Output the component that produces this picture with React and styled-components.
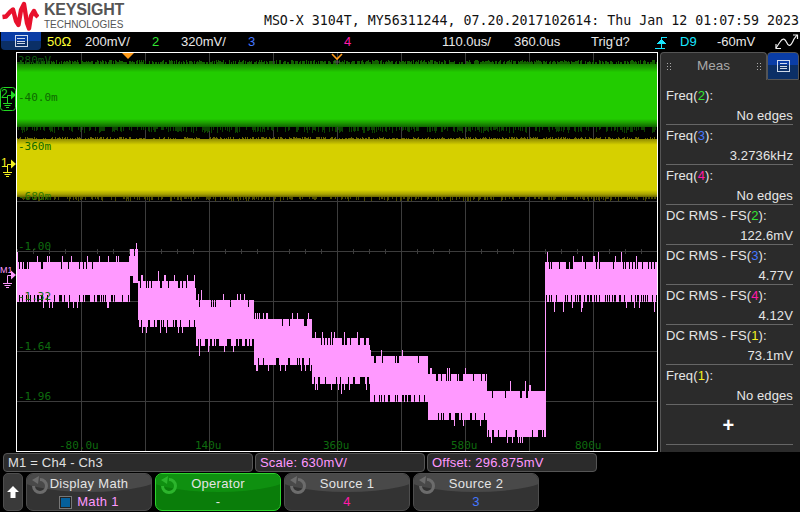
import styled, { createGlobalStyle } from 'styled-components';

const PINK = '#ff99ff';

const GlobalStyle = createGlobalStyle`
  html, body {
    margin: 0;
    background: #000;
  }
`;

const Screen = styled.div`
  width: 800px;
  height: 512px;
  background: #000;
  display: flex;
  flex-direction: column;
  overflow: hidden;
  font-family: "Liberation Sans", Arial, sans-serif;
  font-size: 13px;
  color: #e6e6e6;
`;

/* header */
const Header = styled.div`
  height: 32px;
  background: #fff;
  display: flex;
  align-items: flex-start;
  justify-content: space-between;
`;

const Brand = styled.div`
  display: flex;
  gap: 5px;
  padding: 1px 0 0 1px;
`;

const BrandText = styled.div`
  color: #555;
  display: flex;
  flex-direction: column;
  padding-top: 1px;
`;

const BrandName = styled.span`
  font-size: 16px;
  font-weight: 700;
  line-height: 16px;
  letter-spacing: -0.2px;
`;

const BrandSub = styled.span`
  font-size: 10px;
  line-height: 11px;
  margin-top: 1px;
`;

const Title = styled.div`
  font-family: "DejaVu Sans Mono", monospace;
  font-size: 13.28px;
  line-height: 16px;
  padding: 13px 1px 0 0;
  color: #111;
  white-space: pre;
`;

/* status bar */
const StatusBar = styled.div`
  height: 20px;
  display: flex;
  align-items: center;
`;

const MenuButton = styled.div`
  width: 40px;
  height: 18px;
  margin: 0 6px 2px 1px;
  border-radius: 0 0 4px 4px;
  background: linear-gradient(#0a3da6 0 50%, #0b2f66 50% 100%);
  display: flex;
  align-items: center;
  justify-content: center;
`;

const StatusCell = styled.div`
  width: ${p => p.$w}px;
  color: ${p => p.$color || '#e8e8e8'};
  font-size: 13px;
  line-height: 20px;
  white-space: nowrap;
  display: flex;
  align-items: center;
`;

/* scope area */
const Middle = styled.div`
  height: 400px;
  display: flex;
`;

const Gutter = styled.div`
  width: 16px;
  position: relative;
`;

const Marker = styled.div`
  position: absolute;
  left: 0;
  top: ${p => p.$top}px;
  color: ${p => p.$color};
  z-index: 2;
  line-height: 0;
`;

const Scope = styled.div`
  width: 642px;
  height: 400px;
  box-sizing: border-box;
  border: 1px solid #fff;
  line-height: 0;
`;

/* measurements */
const Side = styled.div`
  width: 140px;
  margin-left: 2px;
  display: flex;
  flex-direction: column;
`;

const TabRow = styled.div`
  height: 28px;
  display: flex;
`;

const MeasTab = styled.div`
  flex: 1;
  box-sizing: border-box;
  background: #2b2b2b;
  border: 1px solid #555;
  border-bottom: none;
  border-radius: 4px 4px 0 0;
  display: flex;
  align-items: center;
  justify-content: space-between;
  padding: 0 5px 2px;
  color: #a8a8a8;
  font-size: 13.5px;
`;

const Grip = styled.span`
  width: 5px;
  height: 8px;
  background-image: radial-gradient(#aaa 0.8px, transparent 1px);
  background-size: 3px 3px;
`;

const BlueTab = styled.div`
  width: 32px;
  margin-right: 1px;
  box-sizing: border-box;
  border: 1px solid #555;
  border-radius: 4px 4px 0 0;
  background: linear-gradient(#0a3da6 0 45%, #0b2f66 45% 100%);
  display: flex;
  align-items: center;
  justify-content: center;
`;

const MeasList = styled.div`
  flex: 1;
  box-sizing: border-box;
  background: #2b2b2b;
  border-left: 1px solid #555;
  padding: 5px 7px 0 5px;
`;

const MeasRow = styled.div`
  height: 40px;
  box-sizing: border-box;
  border-bottom: 1px solid #666;
  display: flex;
  flex-direction: column;
  justify-content: space-between;
  padding: 3px 0 0;
  line-height: 16px;
  letter-spacing: 0.12px;
`;

const MeasValue = styled.span`
  align-self: flex-end;
`;

const Chan = styled.span`
  color: ${p => p.$color};
`;

const AddRow = styled(MeasRow)`
  align-items: center;
  justify-content: center;
  padding: 0 2px 0 0;
  color: #fff;
  font-size: 20px;
  font-weight: 700;
`;

/* bottom */
const InfoRow = styled.div`
  height: 19px;
  margin-top: 1px;
  padding-left: 3px;
  display: flex;
  gap: 2px;
`;

const InfoBox = styled.div`
  width: ${p => p.$w}px;
  box-sizing: border-box;
  background: #2b2b2b;
  border: 1px solid #555;
  border-radius: 4px;
  padding-left: 4px;
  line-height: 17px;
  color: ${p => p.$color || '#e0e0e0'};
  letter-spacing: 0.2px;
`;

const KeyRow = styled.div`
  height: 38px;
  margin-top: 1px;
  padding-left: 3px;
  display: flex;
  gap: 3px;
`;

const ArrowKey = styled.div`
  width: 20px;
  box-sizing: border-box;
  border: 1px solid #4e4e4e;
  border-radius: 5px;
  background: #3a3a3a;
  display: flex;
  align-items: center;
  justify-content: center;
`;

const SoftKey = styled.div`
  width: ${p => p.$w || 126}px;
  box-sizing: border-box;
  position: relative;
  overflow: hidden;
  border: 1px solid ${p => (p.$active ? '#2ed42e' : '#4e4e4e')};
  border-radius: 7px;
  background: ${p => (p.$active ? '#0a7d0a' : '#333')};
  display: flex;
  flex-direction: column;
  align-items: center;
  color: #e4e4e4;
  line-height: 16px;
  letter-spacing: 0.3px;

  &::before {
    content: '';
    position: absolute;
    left: -10%;
    width: 120%;
    top: -16px;
    height: 34px;
    border-radius: 50%;
    background: ${p => (p.$active ? '#0f9010' : '#494949')};
  }
`;

const KeyIcon = styled.span`
  position: absolute;
  left: 3px;
  top: 2px;
  line-height: 0;
  color: ${p => (p.$active ? '#2cb52c' : '#6c6c6c')};
`;

const KeyLabel = styled.span`
  position: relative;
  margin-top: 2px;
`;

const KeyValue = styled.span`
  position: relative;
  margin-top: 2px;
  color: ${p => p.$color || '#e4e4e4'};
  display: flex;
  align-items: center;
  gap: 5px;
`;

const Check = styled.span`
  width: 13px;
  height: 13px;
  box-sizing: border-box;
  border: 1px solid #777;
  background: #05609c;
  box-shadow: inset 0 0 0 1px #222;
`;

// seeded so that the trace noise is the same on every load
let seed = 73;
const rnd = () => {
  seed = (seed * 16807) % 2147483647;
  return seed / 2147483647;
};

const SEGMENTS = [
  { x0: 17, x1: 130, t: 262, h: 40 },
  { x0: 130, x1: 138, t: 249, h: 34 },
  { x0: 138, x1: 196, t: 281, h: 46 },
  { x0: 196, x1: 254, t: 300, h: 46 },
  { x0: 254, x1: 312, t: 319, h: 46 },
  { x0: 312, x1: 370, t: 338, h: 46 },
  { x0: 370, x1: 428, t: 356, h: 46 },
  { x0: 428, x1: 487, t: 374, h: 46 },
  { x0: 487, x1: 546, t: 391, h: 46 },
  { x0: 546, x1: 657, t: 262, h: 40 },
];

const tracePath = () => {
  let d = 'M545.5 262V430';
  SEGMENTS.forEach(({ x0, x1, t, h }) => {
    for (let x = x0; x < x1; x++) {
      let top = t + 7;
      let bottom = t + h - 7;
      const a = rnd();
      const b = rnd();
      if (a < 0.85) top = t;
      if (a < 0.08) top = t - 6;
      if (a < 0.012) top = t - 10;
      if (b < 0.72) bottom = t + h;
      if (b < 0.07) bottom = t + h + 6;
      if (b < 0.012) bottom = t + h + 10;
      d += `M${x + 0.5} ${top}V${bottom}`;
    }
  });
  return d;
};

const fringePath = (y0, y1, chance) => {
  let d = '';
  for (let x = 17; x < 657; x++) {
    if (rnd() < chance) d += `M${x + 0.5} ${y0}V${y0 + (y1 - y0) * (0.4 + rnd() * 0.6)}`;
  }
  return d;
};

const TRACE = tracePath();
const GREEN_TOP = fringePath(64, 60, 0.7);
const GREEN_BOTTOM = fringePath(127, 133, 0.45);
const YELLOW_TOP = fringePath(139, 137, 0.5);
const YELLOW_BOTTOM = fringePath(197, 201, 0.35);

const V_LINES = [81, 145, 209, 273, 337, 401, 465, 529, 593];
const H_LINES = [101, 151, 201, 251, 301, 351, 401];
const H_TICKS = Array.from({ length: 40 }, (_, i) => 17 + i * 16);

const Y_LABELS = [
  ['280mV', 64, '#0d5a0d'],
  ['-40.0m', 101, '#0e6a00'],
  ['-360m', 150, '#0f6a00'],
  ['-680m', 200, '#2f7a00'],
  ['-1.00', 250, '#0e6a0e'],
  ['-1.32', 300, '#0e6a0e'],
  ['-1.64', 350, '#0e6a0e'],
  ['-1.96', 400, '#0e6a0e'],
];
const X_LABELS = [
  ['-80.0u', 59],
  ['140u', 195],
  ['360u', 323],
  ['580u', 451],
  ['800u', 575],
];

const Traces = () => (
  <svg width="640" height="398" viewBox="17 53 640 398">
    <defs>
      <linearGradient id="greenBand" x1="0" y1="0" x2="0" y2="1">
        <stop offset="0" stopColor="#178000" />
        <stop offset="0.06" stopColor="#1da000" />
        <stop offset="0.13" stopColor="#22cc00" />
        <stop offset="0.87" stopColor="#22cc00" />
        <stop offset="0.93" stopColor="#1da000" />
        <stop offset="1" stopColor="#0f6400" />
      </linearGradient>
      <linearGradient id="yellowBand" x1="0" y1="0" x2="0" y2="1">
        <stop offset="0" stopColor="#8f8b00" />
        <stop offset="0.1" stopColor="#d6d000" />
        <stop offset="0.88" stopColor="#d6d000" />
        <stop offset="0.95" stopColor="#a8a300" />
        <stop offset="1" stopColor="#6a6600" />
      </linearGradient>
    </defs>

    <g stroke="#3c3c3c" shapeRendering="crispEdges">
      {V_LINES.map(x => <line key={x} x1={x + 0.5} x2={x + 0.5} y1="53" y2="451" />)}
      {H_LINES.map(y => <line key={y} x1="17" x2="657" y1={y + 0.5} y2={y + 0.5} />)}
      {H_TICKS.map(x => <line key={x} x1={x + 0.5} x2={x + 0.5} y1="249" y2="254" />)}
    </g>

    <path d={GREEN_TOP} stroke="#135f00" shapeRendering="crispEdges" />
    <path d={GREEN_BOTTOM} stroke="#0c4400" shapeRendering="crispEdges" />
    <rect x="17" y="64" width="640" height="63" fill="url(#greenBand)" />
    <path d={YELLOW_TOP} stroke="#6a6600" shapeRendering="crispEdges" />
    <path d={YELLOW_BOTTOM} stroke="#4c4a00" shapeRendering="crispEdges" />
    <rect x="17" y="139" width="640" height="58" fill="url(#yellowBand)" />

    <path d={TRACE} stroke={PINK} shapeRendering="crispEdges" />

    <polygon points="122,53 134,53 128,59" fill="#ff9a1a" />
    <path d="M332 54L337 59L342 54" stroke="#ff9a1a" strokeWidth="1.6" fill="none" />
    <path d="M337 60V65M334 62H340" stroke="#555" />

    <g fontFamily="'DejaVu Sans Mono', monospace" fontSize="11">
      {Y_LABELS.map(([label, y, color]) => (
        <text key={label} x="18" y={y} fill={color}>{label}</text>
      ))}
      {X_LABELS.map(([label, x]) => (
        <text key={label} x={x} y="449" fill="#0e6a0e">{label}</text>
      ))}
    </g>
  </svg>
);

const GroundGlyph = ({ label, boxed }) => (
  <svg width="18" height="28" viewBox="0 0 18 28" fill="none" stroke="currentColor">
    {boxed && <rect x="0.5" y="2.5" width="15" height="23" rx="3" />}
    <text x="1" y="13" fontSize="12" fontFamily="'Liberation Sans', sans-serif" fill="currentColor" stroke="none">{label}</text>
    <path d="M7.5 18V10.5H11M3 18.5H12M4.5 20.5H10.5M6 22.5H9" />
    <polygon points="11,5.5 16,10 11,14.5" fill="currentColor" stroke="none" />
  </svg>
);

const MathGlyph = () => (
  <svg width="18" height="26" viewBox="0 0 18 26" fill="none" stroke="currentColor">
    <text x="0" y="8" fontSize="9" fontFamily="'Liberation Sans', sans-serif" fill="currentColor" stroke="none">M1</text>
    <path d="M7.5 18V10.5H11M3 18.5H12M4.5 20.5H10.5M6 22.5H9" />
    <polygon points="11,5.5 16,10 11,14.5" fill="currentColor" stroke="none" />
  </svg>
);

const MenuIcon = ({ tall }) => (
  <svg width={tall ? 13 : 14} height={tall ? 14 : 12} viewBox="0 0 14 13" fill="none" stroke="#dfe6f2" shapeRendering="crispEdges">
    <rect x="0.5" y="0.5" width="13" height="12" />
    <path d="M3 3.5H11M3 6.5H11M3 9.5H11" />
  </svg>
);

const Logo = () => (
  <svg width="38" height="31" viewBox="0 0 38 31" fill="none">
    <path
      d="M1.5 16L5 15.5L9 11L12 8.5L15 20L17.5 24L20 9L23 3L26 22L28 27.5L30 15L33 10L35 14L37 16"
      stroke="#e8112d"
      strokeWidth="4.4"
      strokeLinejoin="round"
    />
  </svg>
);

const RotateIcon = () => (
  <svg width="20" height="18" viewBox="0 0 20 18" fill="none">
    <path d="M10 3.5A6.5 6.5 0 1 1 3.5 10" stroke="currentColor" strokeWidth="3" />
    <polygon points="2,4 9,0 8,8" fill="currentColor" />
  </svg>
);

const TrigIcon = () => (
  <svg width="14" height="16" viewBox="0 0 14 16" fill="none" stroke="#19e6ff" strokeWidth="1.3" shapeRendering="crispEdges">
    <path d="M0 14.5H10M6.5 14V3.5H12" />
    <polygon points="2,10 11,10 6.5,5" fill="#19e6ff" stroke="none" />
  </svg>
);

const WaveIcon = () => (
  <svg width="24" height="18" viewBox="0 0 24 18" fill="none" stroke="#f0f0f0" strokeWidth="1.2">
    <path d="M1 15L5 9C8 4 10 6 12 10C14 14 16 13 19 6L22 2" />
    <path d="M18 2H22.5V6M1 11V15.5H6" />
  </svg>
);

const UpArrow = () => (
  <svg width="12" height="12" viewBox="0 0 12 12">
    <polygon points="6,0 12,6 8.5,6 8.5,12 3.5,12 3.5,6 0,6" fill="#fff" />
  </svg>
);

const MEAS = [
  { name: 'Freq', ch: '2', color: '#33e633', value: 'No edges' },
  { name: 'Freq', ch: '3', color: '#4477ff', value: '3.2736kHz' },
  { name: 'Freq', ch: '4', color: '#ff1aa8', value: 'No edges' },
  { name: 'DC RMS - FS', ch: '2', color: '#33e633', value: '122.6mV' },
  { name: 'DC RMS - FS', ch: '3', color: '#4477ff', value: '4.77V' },
  { name: 'DC RMS - FS', ch: '4', color: '#ff1aa8', value: '4.12V' },
  { name: 'DC RMS - FS', ch: '1', color: '#f4f020', value: '73.1mV' },
  { name: 'Freq', ch: '1', color: '#f4f020', value: 'No edges' },
];

const App = () => (
  <Screen>
    <GlobalStyle />
    <Header>
      <Brand>
        <Logo />
        <BrandText>
          <BrandName>KEYSIGHT</BrandName>
          <BrandSub>TECHNOLOGIES</BrandSub>
        </BrandText>
      </Brand>
      <Title>MSO-X 3104T, MY56311244, 07.20.2017102614: Thu Jan 12 01:07:59 2023</Title>
    </Header>

    <StatusBar>
      <MenuButton><MenuIcon /></MenuButton>
      <StatusCell $w={38} $color="#ffff33">50Ω</StatusCell>
      <StatusCell $w={67}>200mV/</StatusCell>
      <StatusCell $w={29} $color="#33e633">2</StatusCell>
      <StatusCell $w={67}>320mV/</StatusCell>
      <StatusCell $w={96} $color="#4477ff">3</StatusCell>
      <StatusCell $w={98} $color="#ff1aa8">4</StatusCell>
      <StatusCell $w={72}>110.0us/</StatusCell>
      <StatusCell $w={77}>360.0us</StatusCell>
      <StatusCell $w={64}>Trig'd?</StatusCell>
      <StatusCell $w={25}><TrigIcon /></StatusCell>
      <StatusCell $w={37} $color="#19e6ff">D9</StatusCell>
      <StatusCell $w={58}>-60mV</StatusCell>
      <StatusCell $w={24}><WaveIcon /></StatusCell>
    </StatusBar>

    <Middle>
      <Gutter>
        <Marker $top={33} $color="#22d622"><GroundGlyph label="2" boxed /></Marker>
        <Marker $top={102} $color="#f4f020"><GroundGlyph label="1" /></Marker>
        <Marker $top={213} $color={PINK}><MathGlyph /></Marker>
      </Gutter>
      <Scope><Traces /></Scope>
      <Side>
        <TabRow>
          <MeasTab><Grip />Meas<Grip /></MeasTab>
          <BlueTab><MenuIcon tall /></BlueTab>
        </TabRow>
        <MeasList>
          {MEAS.map(m => (
            <MeasRow key={m.name + m.ch}>
              <span>{m.name}(<Chan $color={m.color}>{m.ch}</Chan>):</span>
              <MeasValue>{m.value}</MeasValue>
            </MeasRow>
          ))}
          <AddRow>+</AddRow>
        </MeasList>
      </Side>
    </Middle>

    <InfoRow>
      <InfoBox $w={250}>M1 = Ch4 - Ch3</InfoBox>
      <InfoBox $w={170} $color={PINK}>Scale: 630mV/</InfoBox>
      <InfoBox $w={170} $color={PINK}>Offset: 296.875mV</InfoBox>
    </InfoRow>

    <KeyRow>
      <ArrowKey><UpArrow /></ArrowKey>
      <SoftKey>
        <KeyIcon><RotateIcon /></KeyIcon>
        <KeyLabel>Display Math</KeyLabel>
        <KeyValue $color={PINK}><Check />Math 1</KeyValue>
      </SoftKey>
      <SoftKey $active>
        <KeyIcon $active><RotateIcon /></KeyIcon>
        <KeyLabel>Operator</KeyLabel>
        <KeyValue>-</KeyValue>
      </SoftKey>
      <SoftKey>
        <KeyIcon><RotateIcon /></KeyIcon>
        <KeyLabel>Source 1</KeyLabel>
        <KeyValue $color="#ff1aa8">4</KeyValue>
      </SoftKey>
      <SoftKey>
        <KeyIcon><RotateIcon /></KeyIcon>
        <KeyLabel>Source 2</KeyLabel>
        <KeyValue $color="#4477ff">3</KeyValue>
      </SoftKey>
    </KeyRow>
  </Screen>
);

export default App;
